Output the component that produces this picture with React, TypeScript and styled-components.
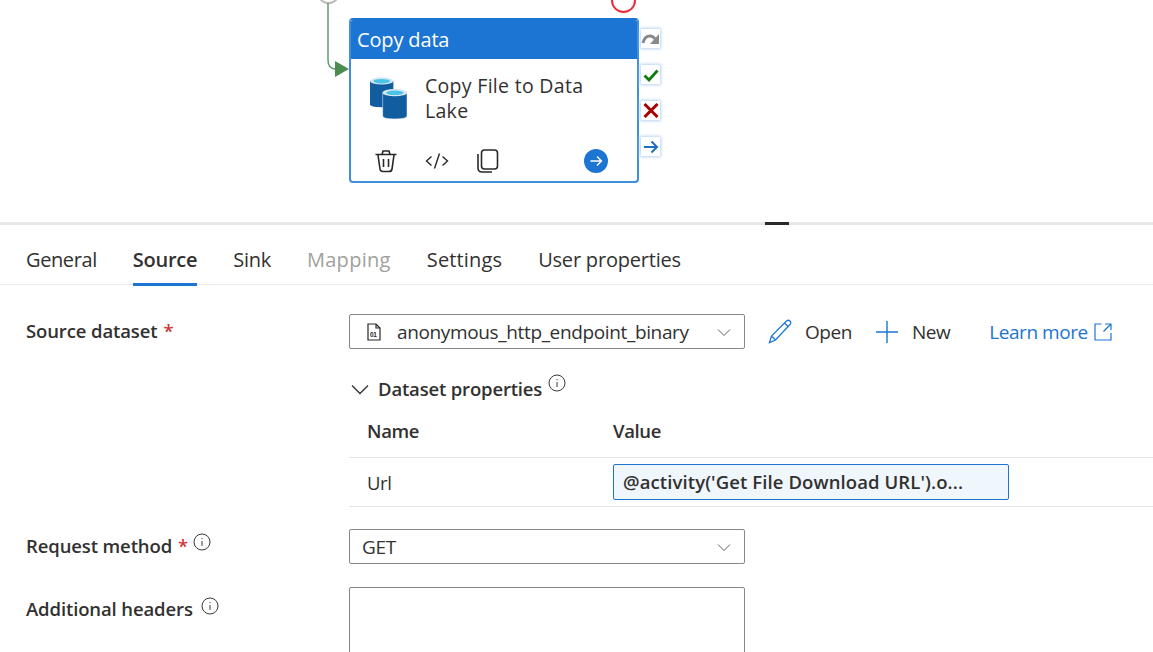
import React from "react";
import styled, { createGlobalStyle } from "styled-components";

const Global = createGlobalStyle`
  html, body { margin: 0; padding: 0; background: #fff; overflow: hidden; }
  body { font-family: "Open Sans", "Noto Sans", "Liberation Sans", sans-serif; color: #323130; }
  * { box-sizing: border-box; }
`;

const Page = styled.div`
  width: 1153px;
  height: 652px;
  overflow: hidden;
  display: flex;
  flex-direction: column;
`;

const Canvas = styled.div`
  position: relative;
  height: 222px;
  flex: none;
`;

const Connector = styled.svg`
  position: absolute;
  left: 310px;
  top: 0;
`;

const StartNode = styled.div`
  position: absolute;
  left: 317px;
  top: -19px;
  width: 23px;
  height: 23px;
  border-radius: 50%;
  border: 2px solid #bdbdbd;
  background: #fff;
`;

const FailNode = styled.div`
  position: absolute;
  left: 611px;
  top: -12px;
  width: 25px;
  height: 25px;
  border-radius: 50%;
  border: 2px solid #ee2a35;
  background: #fff;
`;

const Node = styled.div`
  position: absolute;
  left: 349px;
  top: 18px;
  width: 290px;
  height: 165px;
  border: 2px solid #3f8fdc;
  border-top-color: #1c75d2;
  border-radius: 4px;
  background: #fff;
  display: flex;
  flex-direction: column;
  overflow: hidden;
`;

const NodeHeader = styled.div`
  height: 39px;
  flex: none;
  background: #1c75d2;
  color: #fff;
  font-size: 20px;
  line-height: 39px;
  padding-left: 6px;
  letter-spacing: -0.15px;
`;

const NodeBody = styled.div`
  flex: 1;
  display: flex;
  gap: 18px;
  padding: 14px 20px 0 19px;
`;

const NodeTitle = styled.div`
  font-size: 19.5px;
  line-height: 25px;
  color: #323130;
  letter-spacing: 0.3px;
  width: 190px;
`;

const NodeActions = styled.div`
  height: 41px;
  flex: none;
  display: flex;
  align-items: center;
  padding: 1px 29px 0 23px;
`;

const ActionSlot = styled.div<{ $w: number }>`
  width: ${(p) => p.$w}px;
  flex: none;
  display: flex;
  align-items: center;
`;

const GoButton = styled.div`
  width: 24px;
  height: 24px;
  border-radius: 50%;
  background: #1c75d2;
  margin-left: auto;
  display: flex;
  align-items: center;
  justify-content: center;
`;

const Ports = styled.div`
  position: absolute;
  left: 641px;
  top: 29px;
  display: flex;
  flex-direction: column;
  gap: 17px;
`;

const Port = styled.div`
  width: 19px;
  height: 19px;
  background: #fff;
  box-shadow: 0 0 3px 1px #b5d3f2;
  display: flex;
  align-items: center;
  justify-content: center;
`;

const Splitter = styled.div`
  position: relative;
  height: 3px;
  flex: none;
  background: #e8e8e8;
`;

const Handle = styled.div`
  position: absolute;
  left: 765px;
  top: 0;
  width: 24px;
  height: 3px;
  background: #292929;
`;

const Tabs = styled.div`
  height: 60px;
  flex: none;
  display: flex;
  gap: 36px;
  padding-left: 26px;
  border-bottom: 1px solid #edebe9;
`;

const Tab = styled.div<{ $active?: boolean; $disabled?: boolean; $track?: number }>`
  position: relative;
  font-size: 20px;
  letter-spacing: ${(p) => p.$track ?? -0.27}px;
  line-height: 26px;
  padding-top: 22px;
  height: 60px;
  font-weight: ${(p) => (p.$active ? 600 : 400)};
  color: ${(p) => (p.$disabled ? "#a19f9d" : "#323130")};
  ${(p) =>
    p.$active &&
    `&::after { content: ""; position: absolute; left: 0; right: 0; bottom: -1px; height: 3px; background: #1c75d2; }`}
`;

const Form = styled.div`
  display: grid;
  grid-template-columns: 349px 1fr;
  padding-top: 29px;
`;

const FieldLabel = styled.div<{ $top: number }>`
  padding-left: 26px;
  padding-top: ${(p) => p.$top}px;
  font-size: 18.5px;
  font-weight: 600;
  letter-spacing: -0.12px;
  line-height: 26px;
  color: #323130;
  display: flex;
  align-items: flex-start;
  white-space: nowrap;
`;

const Required = styled.span`
  color: #d13438;
  margin-left: 6px;
`;

const InfoSlot = styled.span<{ $ml: number; $mt: number }>`
  margin-left: ${(p) => p.$ml}px;
  margin-top: ${(p) => p.$mt}px;
  display: inline-flex;
`;

const FieldCell = styled.div`
  min-width: 0;
`;

const DatasetRow = styled.div`
  display: flex;
  align-items: center;
`;

const Select = styled.div`
  width: 396px;
  height: 35px;
  border: 1px solid #8a8886;
  border-radius: 2px;
  display: flex;
  align-items: center;
  padding: 1px 13px 0 12px;
  font-size: 19px;
  letter-spacing: -0.36px;
  color: #323130;
  flex: none;
`;

const SelectText = styled.span`
  flex: 1;
  white-space: nowrap;
`;

const FileIcon = styled.svg`
  margin: 0 16px 0 5px;
  flex: none;
`;

const Command = styled.div<{ $ml: number; $gap: number; $link?: boolean }>`
  display: flex;
  align-items: center;
  margin-left: ${(p) => p.$ml}px;
  gap: ${(p) => p.$gap}px;
  font-size: 19px;
  letter-spacing: -0.45px;
  color: ${(p) => (p.$link ? "#1c75d2" : "#323130")};
  white-space: nowrap;
`;

const DatasetHeading = styled.div`
  display: flex;
  align-items: flex-start;
  margin-top: 25px;
  height: 32px;
  font-size: 18.5px;
  font-weight: 600;
  letter-spacing: -0.17px;
  line-height: 30px;
  color: #323130;
`;

const Chevron = styled.svg`
  flex: none;
`;

const HeadingChevron = styled(Chevron)`
  margin: 10px 9px 0 2px;
`;

const PropsTable = styled.div`
  margin-right: 0;
`;

const PropsRow = styled.div<{ $h: number; $bottom: number }>`
  display: grid;
  grid-template-columns: 246px 1fr;
  height: ${(p) => p.$h}px;
  padding: 0 0 ${(p) => p.$bottom}px 18px;
  align-items: center;
  border-bottom: 1px solid #e4e4e4;
`;

const HeadCell = styled.div`
  font-size: 18.5px;
  font-weight: 600;
  letter-spacing: -0.35px;
`;

const BodyCell = styled.div`
  font-size: 18.5px;
  letter-spacing: -0.4px;
`;

const ExpressionBox = styled.div`
  width: 396px;
  height: 36px;
  border: 1px solid #1c75d2;
  border-radius: 2px;
  background: #eff6fc;
  display: flex;
  align-items: center;
  padding: 0 0 2px 9px;
  font-size: 18.5px;
  font-weight: 600;
  letter-spacing: 0.1px;
  white-space: nowrap;
  color: #323130;
`;

const SelectSpaced = styled(Select)`
  margin-top: 22px;
`;

const TextArea = styled.div`
  margin-top: 23px;
  width: 396px;
  height: 100px;
  border: 1px solid #8a8886;
  border-radius: 2px;
`;

const LabelMethod = styled(FieldLabel)`
  margin-top: 22px;
`;

const LabelHeaders = styled(FieldLabel)`
  margin-top: 23px;
`;

const Info = () => (
  <svg width="18" height="18" viewBox="0 0 18 18" fill="none" stroke="#3b3a39" strokeWidth="1">
    <circle cx="9" cy="9" r="8" />
    <path d="M9 8v5" />
    <circle cx="9" cy="5.6" r=".7" fill="#3b3a39" stroke="none" />
  </svg>
);

const Caret = () => (
  <Chevron width="14" height="14" viewBox="0 0 14 14" fill="none" stroke="#605e5c" strokeWidth="1">
    <path d="M1 4.5l6 6 6-6" />
  </Chevron>
);

export default function App() {
  return (
    <Page>
      <Global />
      <Canvas>
        <StartNode />
        <FailNode />
        <Connector width="40" height="85" viewBox="0 0 40 85">
          <path d="M18 3V60q0 9 8 9" fill="none" stroke="#5f9e6e" strokeWidth="1.5" />
          <path d="M25 61l14 8-14 8z" fill="#4c8c50" />
        </Connector>
        <Node>
          <NodeHeader>Copy data</NodeHeader>
          <NodeBody>
            <svg width="37" height="42" viewBox="0 0 38 43" style={{ flex: "none", marginTop: 4 }}>
              <path d="M0 4v24q0 3 12 3t12-3V4z" fill="#115da0" />
              <ellipse cx="12" cy="4" rx="12" ry="3.7" fill="#d5e7f3" />
              <ellipse cx="12" cy="4.2" rx="8.500" ry="2.300" fill="#49c3e8" />
              <path d="M13 16v24q0 3 12.500 3T38 40V16z" fill="#115da0" stroke="#fff" strokeWidth=".5" />
              <ellipse cx="25.500" cy="16" rx="12.500" ry="3.700" fill="#d5e7f3" />
              <ellipse cx="25.500" cy="16.200" rx="9" ry="2.300" fill="#49c3e8" />
            </svg>
            <NodeTitle>Copy File to Data Lake</NodeTitle>
          </NodeBody>
          <NodeActions>
            <ActionSlot $w={51}>
              <svg width="24" height="24" viewBox="0 0 24 24" fill="none" stroke="#292827" strokeWidth="1.600">
                <path d="M1.500 5.500h21M8 5.500l1-3.500h6l1 3.500M4 6l2 14q.4 2.500 3 2.500h6q2.600 0 3-2.500l2-14M9.500 10v8M14.500 10v8" />
              </svg>
            </ActionSlot>
            <ActionSlot $w={52}>
              <svg width="24" height="18" viewBox="0 0 24 18" fill="none" stroke="#292827" strokeWidth="1.400">
                <path d="M6.500 4.500L1.500 9l5 4.500M17.500 4.500l5 4.500-5 4.500M14.500 1.500l-5 15" />
              </svg>
            </ActionSlot>
            <ActionSlot $w={50}>
              <svg width="22" height="24" viewBox="0 0 22 24" fill="none" stroke="#292827" strokeWidth="1.600">
                <rect x="4.500" y="1" width="16" height="19" rx="3" />
                <path d="M1 5v14q0 4 4 4h10" />
              </svg>
            </ActionSlot>
            <GoButton>
              <svg width="14" height="14" viewBox="0 0 14 14" fill="none" stroke="#fff" strokeWidth="1.400">
                <path d="M1.500 7h11M8 2.500L12.500 7 8 11.500" />
              </svg>
            </GoButton>
          </NodeActions>
        </Node>
        <Ports>
          <Port>
            <svg width="19" height="16" viewBox="0 0 19 16" fill="none">
              <path d="M2 12q1.500-7 7-7 3 0 5 3" stroke="#8a8a8a" strokeWidth="3" />
              <path d="M18 3v10h-9z" fill="#8a8a8a" />
            </svg>
          </Port>
          <Port>
            <svg width="16" height="14" viewBox="0 0 16 14" fill="none">
              <path d="M1.500 7.500l4.500 4.500L14.500 2.500" stroke="#107c10" strokeWidth="2.800" />
            </svg>
          </Port>
          <Port>
            <svg width="16" height="15" viewBox="0 0 16 15" fill="none">
              <path d="M1.500 1l13 13M14.500 1l-13 13" stroke="#a80000" strokeWidth="3" />
            </svg>
          </Port>
          <Port>
            <svg width="16" height="14" viewBox="0 0 16 14" fill="none">
              <path d="M1 7h13.500M8.500 1.500l5.500 5.500-5.500 5.500" stroke="#1c6fc4" strokeWidth="2" />
            </svg>
          </Port>
        </Ports>
      </Canvas>
      <Splitter>
        <Handle />
      </Splitter>
      <Tabs>
        <Tab $track={-0.4}>General</Tab>
        <Tab $active>Source</Tab>
        <Tab>Sink</Tab>
        <Tab $disabled $track={0.3}>Mapping</Tab>
        <Tab $track={0.15}>Settings</Tab>
        <Tab $track={-0.2}>User properties</Tab>
      </Tabs>
      <Form>
        <FieldLabel $top={4}>
          Source dataset<Required>*</Required>
        </FieldLabel>
        <FieldCell>
          <DatasetRow>
            <Select>
              <FileIcon width="14" height="18" viewBox="0 0 14 18" fill="none" stroke="#292827" strokeWidth="1.200">
                <path d="M1 1h8l4 4v12H1zM9 1v4h4" />
                <text x="3" y="14" fontSize="6.500" fontWeight="700" fill="#292827" stroke="none" fontFamily="Liberation Sans">01</text>
              </FileIcon>
              <SelectText>anonymous_http_endpoint_binary</SelectText>
              <Caret />
            </Select>
            <Command $ml={23} $gap={12}>
              <svg width="25" height="25" viewBox="0 0 25 25" fill="none" stroke="#1c75d2" strokeWidth="1.300">
                <path d="M1.500 23.500l2-6.500L18.500 2q2-1.500 3.500 0t0 3.500L7.500 21zM3.500 17l4 4M16.500 4l4 4" />
              </svg>
              Open
            </Command>
            <Command $ml={23} $gap={13}>
              <svg width="24" height="24" viewBox="0 0 24 24" fill="none" stroke="#1c75d2" strokeWidth="1.400">
                <path d="M12 1v22M1 12h22" />
              </svg>
              New
            </Command>
            <Command $ml={39} $gap={6} $link>
              Learn more
              <svg width="18" height="18" viewBox="0 0 18 18" fill="none" stroke="#1c75d2" strokeWidth="1.200">
                <path d="M7.500 1H1v16h16v-7M11 1h6v6M17 1L9.500 8.500" />
              </svg>
            </Command>
          </DatasetRow>
          <DatasetHeading>
            <HeadingChevron width="18" height="12" viewBox="0 0 18 12" fill="none" stroke="#323130" strokeWidth="1.300">
              <path d="M1 1.500l8 8 8-8" />
            </HeadingChevron>
            Dataset properties
            <InfoSlot $ml={6} $mt={0}>
              <Info />
            </InfoSlot>
          </DatasetHeading>
          <PropsTable>
            <PropsRow $h={52} $bottom={2}>
              <HeadCell>Name</HeadCell>
              <HeadCell>Value</HeadCell>
            </PropsRow>
            <PropsRow $h={49} $bottom={0}>
              <BodyCell>Url</BodyCell>
              <ExpressionBox>@activity('Get File Download URL').o...</ExpressionBox>
            </PropsRow>
          </PropsTable>
        </FieldCell>
        <LabelMethod $top={4}>
          Request method<Required>*</Required>
          <InfoSlot $ml={5} $mt={0}>
            <Info />
          </InfoSlot>
        </LabelMethod>
        <FieldCell>
          <SelectSpaced>
            <SelectText>GET</SelectText>
            <Caret />
          </SelectSpaced>
        </FieldCell>
        <LabelHeaders $top={9}>
          Additional headers
          <InfoSlot $ml={8} $mt={1}>
            <Info />
          </InfoSlot>
        </LabelHeaders>
        <FieldCell>
          <TextArea />
        </FieldCell>
      </Form>
    </Page>
  );
}
